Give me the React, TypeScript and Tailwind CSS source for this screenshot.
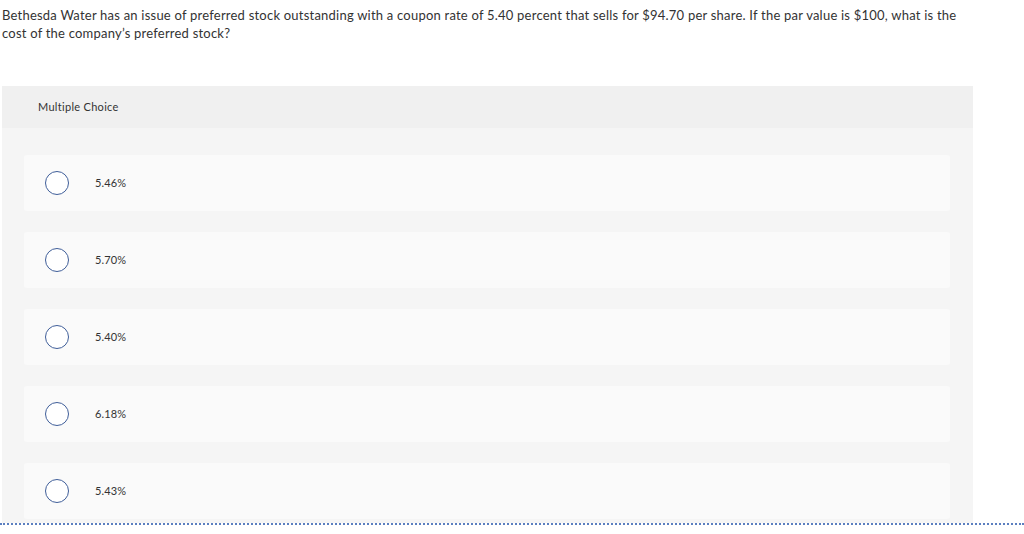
import React from "react";

const options = ["5.46%", "5.70%", "5.40%", "6.18%", "5.43%"];

export default function App() {
  return (
    <div className="w-[1024px] h-[534px] bg-white overflow-hidden text-[#333]" style={{ fontFamily: "Lato, 'Noto Sans', sans-serif" }}>
      <div className="pl-[2px] pt-[6px] text-[13px] leading-[18px] tracking-[0.22px]">
        Bethesda Water has an issue of preferred stock outstanding with a coupon rate of 5.40 percent that sells for $94.70 per share. If the par value is $100, what is the
        <br />
        cost of the company’s preferred stock?
      </div>
      <div className="mt-[44px] ml-[2px] w-[971px] bg-[#f5f5f5]">
        <div className="h-[42px] bg-[#f0f0f0] flex items-center pl-[36px] text-[11px] tracking-[0.3px]">Multiple Choice</div>
        <div className="pt-[27px] pl-[22px] pr-[23px] flex flex-col gap-[21px]">
          {options.map((o) => (
            <div key={o} className="h-[56px] bg-[#fafafa] rounded-[3px] flex items-center">
              <div className="ml-[21px] w-[24px] h-[24px] rounded-full border border-[#3f5e99] bg-white" />
              <div className="ml-[26px] text-[11px] tracking-[0.1px]">{o}</div>
            </div>
          ))}
        </div>
        <div className="h-[4px]" />
      </div>
      <div className="border-t-2 border-dotted border-[#5b7fc0]" />
    </div>
  );
}
